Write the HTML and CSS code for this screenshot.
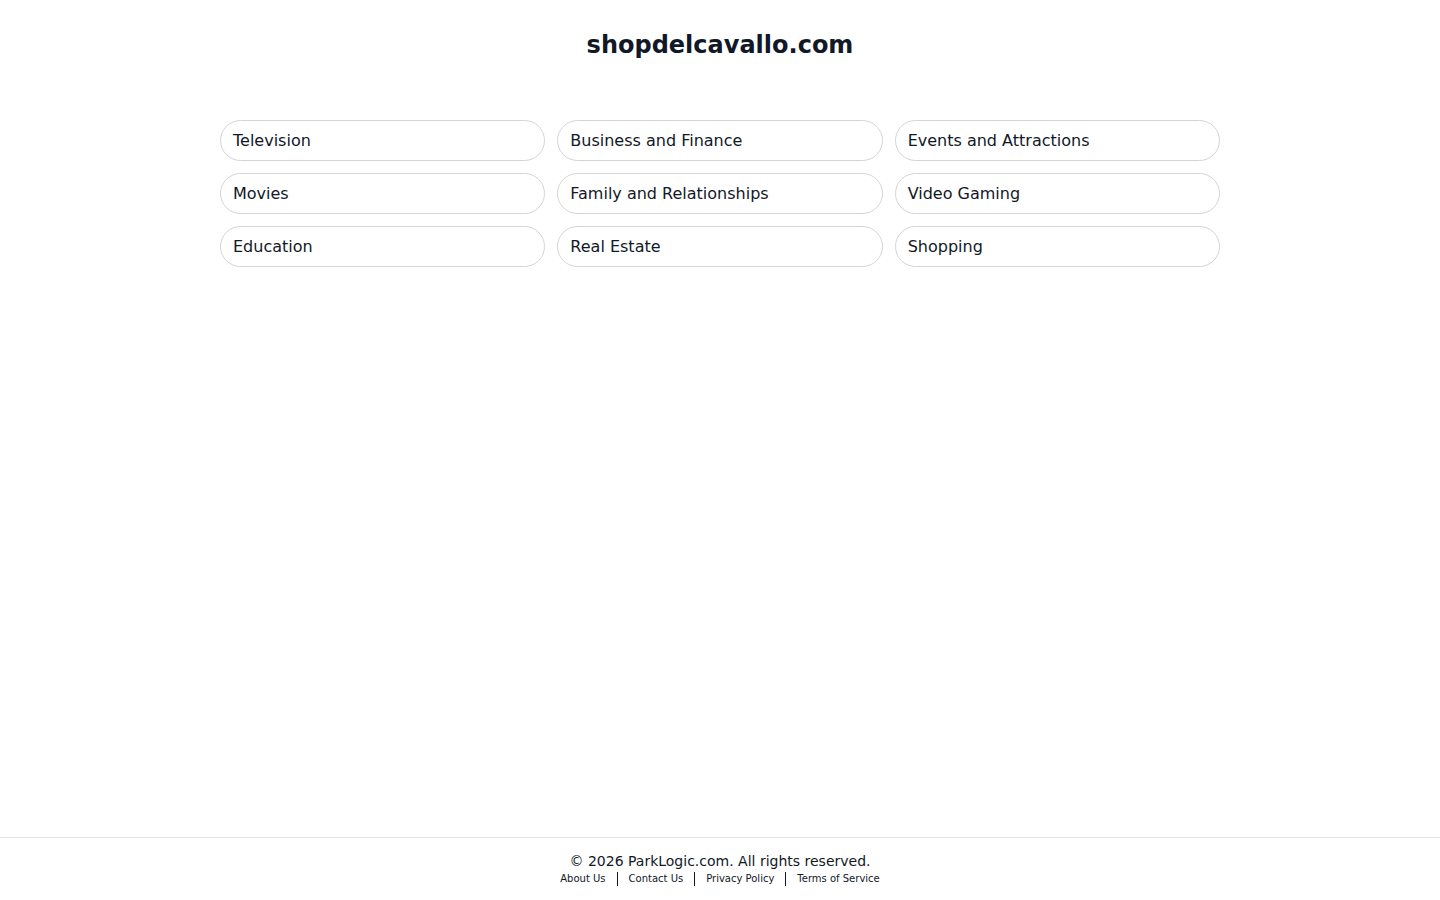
FILE: index.html
```html
<!DOCTYPE html>
<html lang="en">
<head>
<meta charset="utf-8">
<title>shopdelcavallo.com</title>
<link rel="stylesheet" href="styles.css">
</head>
<body>
<div class="page">
  <main class="main">
    <h1 class="title">shopdelcavallo.com</h1>
    <div class="grid">
      <a class="pill" href="#">Television</a>
      <a class="pill" href="#">Business and Finance</a>
      <a class="pill" href="#">Events and Attractions</a>
      <a class="pill" href="#">Movies</a>
      <a class="pill" href="#">Family and Relationships</a>
      <a class="pill" href="#">Video Gaming</a>
      <a class="pill" href="#">Education</a>
      <a class="pill" href="#">Real Estate</a>
      <a class="pill" href="#">Shopping</a>
    </div>
  </main>
  <footer class="footer">
    <div class="copy">© 2026 ParkLogic.com. All rights reserved.</div>
    <div class="links">
      <a href="#">About Us</a><span class="sep"></span>
      <a href="#">Contact Us</a><span class="sep"></span>
      <a href="#">Privacy Policy</a><span class="sep"></span>
      <a href="#">Terms of Service</a>
    </div>
  </footer>
</div>
</body>
</html>
```
FILE: styles.css
```css
html, body {
  margin: 0;
  padding: 0;
  background: #ffffff;
  color: #111827;
  font-family: "DejaVu Sans", Verdana, sans-serif;
}
.page {
  min-height: 100vh;
  display: flex;
  flex-direction: column;
}
.main {
  flex: 1;
  display: flex;
  flex-direction: column;
  align-items: center;
}
.title {
  margin: 29px 0 0;
  font-size: 24px;
  line-height: 32px;
  font-weight: bold;
  color: #111827;
}
.grid {
  margin-top: 59px;
  width: 1000px;
  display: grid;
  grid-template-columns: repeat(3, 1fr);
  column-gap: 12px;
  row-gap: 12px;
}
.pill {
  display: flex;
  align-items: center;
  height: 41px;
  box-sizing: border-box;
  padding: 0 12px;
  border: 1px solid #d4d4d8;
  border-radius: 21px;
  font-size: 16px;
  color: #111827;
  text-decoration: none;
}
.footer {
  border-top: 1px solid #e5e7eb;
  padding: 14px 0 13px;
  text-align: center;
}
.copy {
  font-size: 14px;
  line-height: 18px;
}
.links {
  display: flex;
  justify-content: center;
  align-items: center;
  margin-top: 1px;
  font-size: 10px;
  line-height: 16px;
}
.links a {
  color: #111827;
  text-decoration: none;
}
.sep {
  display: inline-block;
  width: 1px;
  height: 14px;
  background: #111827;
  margin: 0 11px;
}
```
